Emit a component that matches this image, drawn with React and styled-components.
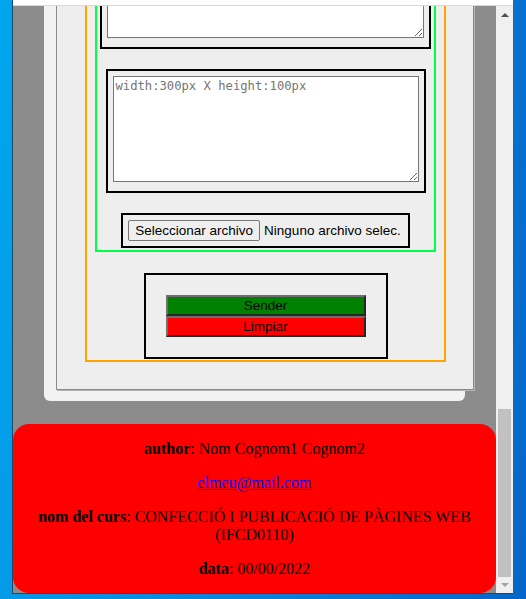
import React from 'react';
import styled, { createGlobalStyle } from 'styled-components';

const GlobalStyle = createGlobalStyle`
html, body {margin: 0; padding: 0;}
body {overflow: hidden; font-family: "Liberation Serif", serif;}
`

const Desktop = styled.div`
width: 526px;
height: 599px;
background: linear-gradient(100deg, #00a6ee 0%, #0a88de 45%, #0766c8 100%);
overflow: hidden;`

const Window = styled.div`
margin-left: 12px;
width: 500px;
height: 593px;
border-left: 1px solid #1d4a68;
border-bottom: 1px solid #1d4a68;
display: flex;
flex-direction: column;`

const ChromeStrip = styled.div`
height: 5px;
flex-shrink: 0;
background: #ffffff;
border-bottom: 1px solid #dadada;`

const Body = styled.div`
flex: 1;
min-height: 0;
display: flex;
flex-direction: row;`

const Viewport = styled.div`
flex: 1;
background: #8c8c8c;
overflow: hidden;
display: flex;
flex-direction: column;
justify-content: flex-end;`

const Page = styled.div`
flex-shrink: 0;`

const Panel = styled.div`
width: 421px;
box-sizing: border-box;
margin: 0 auto 23px;
padding: 0 0 11px 12px;
background: #f2f2f2;
border-radius: 0 0 6px 6px;`

const Frame = styled.div`
width: 418px;
box-sizing: border-box;
padding: 0 27px 27px 28px;
background: #eeeeee;
border: 1px solid #8a8a8a;
box-shadow: 1px 1px 0 #b4b4b4;`

const Outer = styled.div`
border: 2px solid #ffa500;
padding: 0 8px;
display: flex;
flex-direction: column;
align-items: center;`

const Inner = styled.div`
align-self: stretch;
border: 2px solid #00ff40;
padding: 0 0 2px;
display: flex;
flex-direction: column;
align-items: center;
gap: 20px;`

const Box = styled.div`
border: 2px solid #000;
padding: ${p => p.$loose ? '5px 5px 9px' : '5px'};
display: flex;
align-items: center;`

const TextArea = styled.textarea`
display: block;
width: ${p => p.$w}px;
height: 100px;
margin: 0;
padding: 2px;
border: 1px solid #767676;
background: #fff;
font-family: "DejaVu Sans Mono", monospace;
font-size: 12.2px;
resize: both;
&::placeholder {color: #757575;}`

const FileButton = styled.button`
margin: 0;
padding: 2px 6px;
border: 1px solid #767676;
border-radius: 2px;
background: #efefef;
color: #000;
font-family: "Liberation Sans", Arial, sans-serif;
font-size: 13.5px;
line-height: 15px;`

const FileLabel = styled.span`
margin-left: 4px;
margin-right: 2px;
color: #000;
font-family: "Liberation Sans", Arial, sans-serif;
font-size: 13.5px;`

const ActionBox = styled.div`
margin: 21px 0 1px;
border: 2px solid #000;
padding: 20px;
display: flex;
flex-direction: column;`

const ActionButton = styled.button`
display: block;
width: 200px;
height: 21px;
margin: 0;
padding: 0;
box-sizing: border-box;
border: 2px solid;
border-color: #6e6e6e #262626 #262626 #6e6e6e;
background: ${p => p.$bg};
color: #000;
font-family: "Liberation Sans", Arial, sans-serif;
font-size: 13.5px;
line-height: 15px;`

const Footer = styled.footer`
display: flow-root;
background: #ff0000;
border-radius: 16px;
padding: 0 8px;
text-align: center;
font-family: "Liberation Serif", "Times New Roman", serif;
font-size: 16px;
line-height: 18px;
color: #000;
& p {margin: 16px 0;}
& p:last-child {margin-bottom: 15px;}
& a {color: #0000ee;}`

const Scrollbar = styled.div`
width: 17px;
flex-shrink: 0;
background: #f0f0f0;
display: flex;
flex-direction: column;`

const Arrow = styled.div`
height: ${p => p.$h}px;
flex-shrink: 0;
display: flex;
align-items: center;
justify-content: center;`

const Triangle = styled.span`
display: block;
width: 0;
height: 0;
border-left: 4px solid transparent;
border-right: 4px solid transparent;
${p => p.$down
  ? `border-top: 4px solid ${p.$color};`
  : `border-bottom: 4px solid ${p.$color};`}`

const Track = styled.div`
flex: 1;
display: flex;
flex-direction: column;
justify-content: flex-end;`

const Thumb = styled.div`
height: 168px;
margin: 0 2px;
background: #c1c1c1;`

export default function App() {
  return (
    <>
      <GlobalStyle />
      <Desktop>
        <Window>
          <ChromeStrip />
          <Body>
            <Viewport>
              <Page>
                <Panel>
                  <Frame>
                    <Outer>
                      <Inner>
                        <Box $loose>
                          <TextArea $w={311} />
                        </Box>
                        <Box $loose>
                          <TextArea $w={300} placeholder="width:300px X height:100px" />
                        </Box>
                        <Box>
                          <FileButton type="button">Seleccionar archivo</FileButton>
                          <FileLabel>Ninguno archivo selec.</FileLabel>
                        </Box>
                      </Inner>
                      <ActionBox>
                        <ActionButton type="submit" $bg="#008000">Sender</ActionButton>
                        <ActionButton type="reset" $bg="#ff0000">Limpiar</ActionButton>
                      </ActionBox>
                    </Outer>
                  </Frame>
                </Panel>
                <Footer>
                  <p><b>author</b>: Nom Cognom1 Cognom2</p>
                  <p><a href="mailto:elmeu@mail.com">elmeu@mail.com</a></p>
                  <p><b>nom del curs</b>: CONFECCIÓ I PUBLICACIÓ DE PÀGINES WEB (IFCD0110)</p>
                  <p><b>data</b>: 00/00/2022</p>
                </Footer>
              </Page>
            </Viewport>
            <Scrollbar>
              <Arrow $h={17}>
                <Triangle $color="#505050" />
              </Arrow>
              <Track>
                <Thumb />
              </Track>
              <Arrow $h={16}>
                <Triangle $down $color="#a3a3a3" />
              </Arrow>
            </Scrollbar>
          </Body>
        </Window>
      </Desktop>
    </>
  );
}
